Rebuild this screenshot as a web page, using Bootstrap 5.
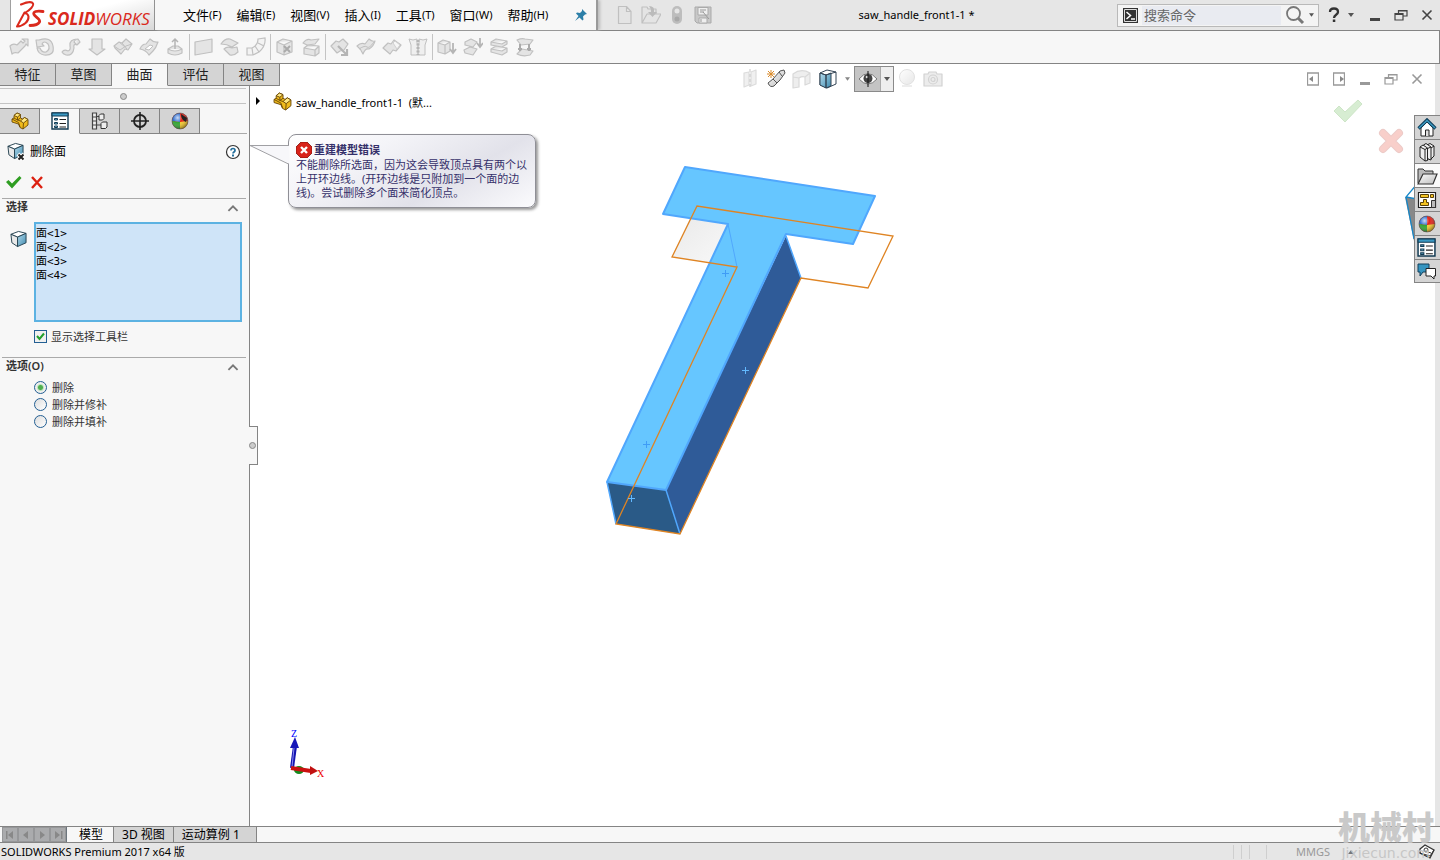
<!DOCTYPE html>
<html lang="zh-CN">
<head>
<meta charset="utf-8">
<meta name="viewport" content="width=device-width, initial-scale=1">
<title>saw_handle_front1-1 - SOLIDWORKS Premium 2017</title>
<link href="https://cdn.jsdelivr.net/npm/bootstrap@5.3.0/dist/css/bootstrap.min.css" rel="stylesheet">
<style>
:root{--line:#848484;--pane:#f7f7f7;--bar:#e6e6e6;--tabbg:#d4d4d4}
body{font-family:"Noto Sans","Noto Sans CJK SC",sans-serif;font-size:12px;line-height:16px;color:#000;background:#fff}
button{border:0;background:none;padding:0;color:inherit;font:inherit;line-height:inherit}
svg{display:block;flex:none}
.titlebar{height:31px;background:var(--bar);border-bottom:1px solid var(--line)}
.brand{width:145px;margin-left:10px;border-left:1px solid #a0a0a0;border-right:1px solid #909090;background:linear-gradient(165deg,#fff 45%,#d8d8d8);gap:3px}
.brand-name{font:italic 17px/18px "Open Sans",sans-serif;color:#da291c;white-space:nowrap;padding-top:8px}
.menus{width:443px;background:var(--pane);border-right:2px solid #9a9a9a;box-shadow:2px 0 3px #bbb;padding-left:28px;gap:15px;font-size:13px}
.menus a{color:#000;text-decoration:none;white-space:nowrap;display:flex;align-items:center}
.menus small{font-size:11px}
.icon26{width:26px;display:flex;align-items:center;justify-content:center}
.quick{margin-left:14px}
.doc-name{font-size:11px}
.search{width:202px;height:23px;border:1px solid #b9b9b9;background:#f4f4f4;padding:0 4px 0 5px}
.search input{width:139px;height:19px;border:0;background:#e9ebf1;font-size:13px;padding:0 2px;outline:0}
.search input::placeholder{color:#666;opacity:1}
.winctl{color:#444;margin-left:9px}
.ribbon{height:33px;background:var(--pane);border-bottom:1px solid var(--line);border-right:1px solid var(--line);padding-left:6px}
.rule{width:1px;height:26px;margin:0 1px;background:#c4c4c4}
.g{stroke:#c0c0c0;fill:#e4e4e4;stroke-width:1.2;stroke-linejoin:round}
.work{min-height:0}
.pane{width:250px;background:var(--pane);border-right:1px solid var(--line);z-index:2}
.cmdtabs{width:280px;height:22px;background:var(--tabbg)}
.cmdtabs button{width:56px;border-right:1px solid var(--line);border-bottom:1px solid var(--line);font-size:13px;line-height:18px;padding-bottom:2px;color:#222}
.cmdtabs .on{background:var(--pane);border-bottom-color:var(--pane)}
.grip{height:16px;margin:2px 3px 4px 0;border-top:1px solid #c4c4c4;border-bottom:1px solid #c4c4c4}
.dot{width:7px;height:7px;border:1px solid #888;border-radius:50%;background:#ccc}
.pmtabs{height:26px;border-bottom:1px solid #aaa;margin-right:2px}
.pmtabs button{width:40px;height:26px;border:1px solid var(--line);border-left:0;background:var(--tabbg);display:flex;align-items:center;justify-content:center}
.pmtabs .on{background:var(--pane);border-bottom-color:var(--pane);border-top-color:#aaa}
.feature{padding:8px 8px 3px 7px}
.confirm{padding:8px 6px 6px;gap:8px}
.sect{border-top:1px solid #aaa;margin:0 3px 0 2px;padding:0 7px 0 4px;font-size:11px;color:#333}
.sect h2{font-size:11px;line-height:15px;height:15px;font-weight:600;margin:0}
.fold{padding-top:5px;height:13px}
.picks{width:208px;height:100px;border:2px solid #5cb2e2;background:#cfe4f8;padding:0;font:11px/14px "DejaVu Sans Mono","Noto Sans CJK SC",monospace;overflow:hidden;outline:0;border-radius:0;margin-left:7px}
.picks option{padding:0 0 4px;height:14px;min-height:14px;line-height:10px;color:#000}
.tick,.dial{appearance:none;width:13px;height:13px;margin:0;border:1px solid #235f93;background:linear-gradient(135deg,#ddd,#fff);flex:none}
.dial{border-radius:50%}
.tick:checked{background:url("data:image/svg+xml,%3Csvg xmlns='http://www.w3.org/2000/svg' viewBox='0 0 11 11'%3E%3Cpath d='M2 5l2.5 3L9 2.5' fill='none' stroke='%2322a02c' stroke-width='2'/%3E%3C/svg%3E") #f0f0f0}
.dial:checked{background:radial-gradient(circle,#4fae4f 0 2px,#bce4bc 3px,#eee 4px)}
.showbar{padding:8px 0 14px}
.opts{padding-top:6px}
.opts label{height:17px;display:flex;align-items:center;gap:5px}
.flap{left:249px;top:362px;width:9px;height:39px;border:1px solid var(--line);border-left:0;background:var(--pane);z-index:3}
.view{background:#fff;margin-right:5px}
.hud{display:grid;grid-template-columns:1fr auto 1fr;height:30px;align-items:center;padding-right:2px}
.docctl{color:#999;padding-right:3px}
.eye{width:40px;height:26px;border:1px solid #8a8a8a;background:#c4c4c4}
.eye button+button{width:13px;background:#eee;border-left:1px solid #aaa;height:100%}
.tree{height:14px;padding-left:5px;font-size:11px}
.bubble{left:38px;top:70px;width:248px;height:74px;border:1px solid #8f8f96;border-radius:8px;background:linear-gradient(150deg,#fff 0,#f4f4f8 30%,#e2e2ea 65%,#fbfbfd);box-shadow:2px 2px 3px #999;padding:6px 6px 0 7px;font-size:11px;line-height:14px;color:#35306a;white-space:nowrap}
.bubble-head{height:17px;gap:2px}
.tail{left:0;top:80px}
.model{left:350px;top:96px}
.triad{left:34px;bottom:46px}
.ok-mark{right:71px;top:34px}
.no-mark{right:30px;top:64px}
.edge{right:18px;top:119px}
.strip{width:5px;background:var(--bar)}
.tasks{right:0;top:51px;width:26px;border:1px solid var(--line);border-right:0;background:var(--tabbg);z-index:4}
.tasks button{height:24px;border-bottom:1px solid var(--line);display:flex;justify-content:center;align-items:center;width:100%;padding-right:2px}
.tasks button:last-child{border:0;height:22px}
.tasks .on{background:#fafafa}
.doctabs{height:17px;background:var(--pane);border-top:1px solid var(--line);border-bottom:1px solid var(--line);font-size:12px;line-height:12px;padding-left:2px}
.doctabs .page{border-right:1px solid var(--line);background:var(--tabbg);padding:0 8px;white-space:nowrap}
.doctabs .on{background:var(--pane);padding:0 10px 0 12px}
.doctabs .go{width:16px;height:15px;background:#aaabad;border:1px solid #969799;display:flex;align-items:center;justify-content:center}
.status{height:17px;background:var(--bar);padding-left:1px;font-size:11px}
.status i{width:1px;height:14px;background:#cfcfcf}
.bars{gap:7px}
.units{color:#999;padding:0 18px 0 29px}
.mark-cn{right:6px;bottom:20px;z-index:5;color:#c9c9c9;font:900 32px/30px "Noto Sans CJK SC",sans-serif;pointer-events:none}
.mark-en{right:10px;bottom:0;z-index:5;color:#c6c6c6;font:14px/14px "DejaVu Sans",sans-serif;pointer-events:none}
</style>
</head>
<body class="vh-100 d-flex flex-column overflow-hidden position-relative">
<svg width="0" height="0" class="position-absolute" aria-hidden="true">
<defs>
<linearGradient id="blu" x2="1" y2="1"><stop stop-color="#b5dcee"/><stop offset="1" stop-color="#3e89ad"/></linearGradient>
<linearGradient id="gry" x2="1" y2="1"><stop stop-color="#fff"/><stop offset="1" stop-color="#bbb"/></linearGradient>
<radialGradient id="shade" cx=".35" cy=".3" r=".75"><stop stop-color="#fff" stop-opacity=".75"/><stop offset=".4" stop-color="#fff" stop-opacity="0"/><stop offset="1" stop-color="#000" stop-opacity=".45"/></radialGradient>
<symbol id="part" viewBox="0 0 18 18"><g stroke="#6b4a08" stroke-width=".9" stroke-linejoin="round"><path d="M1 7l2-1V3.500L6 1l3.500 1.500V6l2 1 2-1.500L17 7.500V13l-5 4-3-1.500-1.500-3.500L1 10z" fill="#f0bb1c"/><path d="M3 3.500L6 1l3.500 1.500L6.500 5zM9.500 9l4-3.500L17 7.500 12.500 11z" fill="#ffe880"/><path d="M3 6l3.500 2 3 1M6.500 5v3L9.500 6M1 7l6.500 3.500L9 15M12.500 11L12 17" fill="none"/></g></symbol>
<symbol id="props" viewBox="0 0 18 18"><path d="M1 1h16v16H1z" fill="#fff" stroke="#123a52" stroke-width="1.400"/><path d="M1 1h16v3H1z" fill="#3a9ac4" stroke="#123a52"/><path d="M3.500 6.500h3v1.500h-3zM3.500 10.500h3V12h-3zM3.500 14h3v1.500h-3z" fill="#7cc3e0" stroke="#123a52"/><path d="M8.500 7.500H15M8.500 11.500H15M8.500 15H15" stroke="#222"/></symbol>
<symbol id="config" viewBox="0 0 18 18"><path d="M1.500 1h4v16h-4zM6 4.500h4M6 13h4" fill="#eee" stroke="#444" stroke-width="1.200"/><path d="M1.500 5h4M1.500 9h4M1.500 13h4" stroke="#444"/><path d="M8 3.500l1.500-1.500H13V6.500L11.500 8H8zM10 11.500l1.500-1.500H16V15l-1.500 1.500H10z" fill="#eee" stroke="#333"/></symbol>
<symbol id="target" viewBox="0 0 18 18"><circle cx="9" cy="9" r="6" fill="none" stroke="#222" stroke-width="1.800"/><path d="M9 0v18M0 9h18" stroke="#222" stroke-width="1.600"/></symbol>
<symbol id="ball" viewBox="0 0 18 18"><circle cx="9" cy="9" r="8" fill="#e1251b"/><path d="M9 1a8 8 0 0 0-8 8l8 1z" fill="#2f6ed0"/><path d="M1 9a8 8 0 0 0 8 8V10z" fill="#33a532"/><path d="M9 17a8 8 0 0 0 8-8L9 10z" fill="#f6ca2a"/><circle cx="9" cy="9" r="8" fill="url(#shade)" stroke="#555" stroke-width=".6"/></symbol>
<symbol id="cube" viewBox="0 0 18 18"><g stroke="#244150" stroke-linejoin="round"><path d="M1 4l8-3 8 2-9 4z" fill="#fff"/><path d="M1 4l7 3v10l-6-4z" fill="#e9e9e9"/><path d="M8 7l9-4v10l-9 4z" fill="url(#blu)"/></g></symbol>
<symbol id="arr" viewBox="0 0 6 4"><path d="M0 0h6L3 4z" fill="#555"/></symbol>
<symbol id="up" viewBox="0 0 10 7"><path d="M1 6l4-4 4 4" fill="none" stroke="#777" stroke-width="1.600"/></symbol>
<symbol id="min" viewBox="0 0 14 14"><path d="M2 10h10v3H2z" fill="currentColor"/></symbol>
<symbol id="rest" viewBox="0 0 14 14"><path d="M1 5.500h8V12H1zM4.500 5.500v-3h8.500V8H9.500M1 6.500h8M4.500 3h8.500" fill="none" stroke="currentColor" stroke-width="1.200"/></symbol>
<symbol id="cls" viewBox="0 0 14 14"><path d="M2.500 2.500l9 9M11.500 2.500l-9 9" stroke="currentColor" stroke-width="1.600"/></symbol>
</defs></svg>

<header class="titlebar d-flex align-items-stretch flex-shrink-0">
  <div class="brand d-flex align-items-center flex-shrink-0 ps-1">
    <svg width="30" height="28" viewBox="0 0 30 28" fill="none" stroke="#da291c" stroke-linecap="round" stroke-linejoin="round"><path d="M6 3.500C12 1 17 .5 18 2.500C19 5 15 9 10.500 11.500" stroke-width="2"/><path d="M9.500 11.500L2 25.500C9 25 14 20 13.500 15.500Q13 12.500 9.500 12" stroke-width="2"/><path d="M28 10.500C22 9.500 17.500 10.500 19 13.500C20 16 26 18 24.500 21C23 24 19 24.500 15 24.500" stroke-width="2.800"/></svg>
    <span class="brand-name"><b>SOLID</b>WORKS</span>
  </div>
  <nav class="menus d-flex flex-shrink-0" aria-label="主菜单">
    <a href="#">文件<small>(F)</small></a><a href="#">编辑<small>(E)</small></a><a href="#">视图<small>(V)</small></a><a href="#">插入<small>(I)</small></a><a href="#">工具<small>(T)</small></a><a href="#">窗口<small>(W)</small></a><a href="#">帮助<small>(H)</small></a>
    <button class="ms-auto me-2" aria-label="固定菜单"><svg width="14" height="14" viewBox="0 0 14 14"><path d="M8 1l5 5-2 .5-2 2 .5 3-1 1L5.500 9.500 1 13l3.500-5L2 5.500l1-1L6 5l2-2z" fill="#2c7fa8"/></svg></button>
  </nav>
  <div class="quick d-flex align-items-center">
    <span class="icon26"><svg width="18" height="20" viewBox="0 0 18 20"><path class="g" d="M2.500 1.500h8l4.500 5v12H2.500zM10.500 1.500v5H15"/></svg></span>
    <span class="icon26"><svg width="20" height="20" viewBox="0 0 20 20"><path class="g" d="M1 18V2h5l1 2h8v5M1 18L6 9h14l-5 9z"/><path d="M8 1q6 0 5 6h3l-4.500 5L7 7h3q0-4-2-6z" fill="#bbb"/></svg></span>
    <span class="icon26"><svg width="12" height="20" viewBox="0 0 12 20"><rect x="1" y="1" width="10" height="18" rx="5" fill="#bdbdbd"/><circle cx="6" cy="6" r="2.500" fill="#e6e6e6"/><circle cx="6" cy="14" r="2.500" fill="#a8a8a8"/></svg></span>
    <span class="icon26"><svg width="18" height="18" viewBox="0 0 18 18"><path d="M1 1h16v16H3l-2-2z" fill="#c8c8c8" stroke="#aaa"/><path d="M4 1.500h10V9H4zM5 12h8v5H5z" fill="#eee" stroke="#aaa"/><path d="M6 4h6M6 6h4M9 6l6 7M7 13v3" stroke="#999"/></svg></span>
  </div>
  <div class="doc-name flex-fill text-center align-self-center">saw_handle_front1-1 *</div>
  <div class="search d-flex align-items-center align-self-center flex-shrink-0">
    <svg width="15" height="15" viewBox="0 0 15 15"><path d="M0 0h15v15H0z" fill="#333"/><path d="M1.500 1.500h12v12h-12z" fill="none" stroke="#ddd"/><path d="M3.500 4l4 3.500-4 3.500M8 11h4" fill="none" stroke="#fff" stroke-width="1.500"/></svg>
    <input class="ms-1" type="text" placeholder="搜索命令" aria-label="搜索命令">
    <button class="ms-1 flex-shrink-0" aria-label="搜索"><svg width="20" height="20" viewBox="0 0 20 20"><circle cx="8.500" cy="8.500" r="6.500" fill="none" stroke="#777" stroke-width="1.800"/><path d="M13 13l5 5" stroke="#777" stroke-width="3"/></svg></button>
    <svg class="ms-1" width="5" height="4"><use href="#arr"/></svg>
  </div>
  <div class="winctl d-flex align-items-center flex-shrink-0">
    <button aria-label="帮助"><svg width="12" height="16" viewBox="0 0 12 16"><path d="M2 5q0-3.500 4-3.500t4 3.500c0 3-4 2.500-4 6" fill="none" stroke="#333" stroke-width="2.300"/><path d="M4.800 12.500h2.500V15H4.800z" fill="#333"/></svg></button>
    <svg class="mx-2" width="6" height="4"><use href="#arr"/></svg>
    <button class="icon26" aria-label="最小化"><svg width="14" height="14"><use href="#min"/></svg></button>
    <button class="icon26" aria-label="还原"><svg width="14" height="14"><use href="#rest"/></svg></button>
    <button class="icon26" aria-label="关闭"><svg width="14" height="14"><use href="#cls"/></svg></button>
  </div>
</header>

<div class="ribbon d-flex align-items-center flex-shrink-0">
  <span class="icon26"><svg width="20" height="20" viewBox="0 0 20 20"><path class="g" d="M1 9q3-3 7-1l4-4 2 2 2-2-3-2h6v7l-2-2-1 2-7 7q-4-1-6 1z"/></svg></span>
  <span class="icon26"><svg width="20" height="20" viewBox="0 0 20 20"><path class="g" d="M4 3q12-4 14 6t-9 9q-6-1-7-7h3q2 5 6 4 5-3 2-8-4-4-6 0l2 2-7 1-1-7z"/></svg></span>
  <span class="icon26"><svg width="20" height="20" viewBox="0 0 20 20"><path class="g" d="M1 15q2-3 6-1 3-1 2-5-1-7 8-7l2 3-3 3q-4-2-3 3-1 8-8 7-3-1-4-3zM15 2l-2 3 3 3"/></svg></span>
  <span class="icon26"><svg width="18" height="20" viewBox="0 0 18 20"><path class="g" d="M4 2h10v10h3l-8 6-8-6h3z" fill="#d4d4d4"/></svg></span>
  <span class="icon26"><svg width="20" height="20" viewBox="0 0 20 20"><path class="g" d="M1 9l5-4 3 1 4-4 6 5-4 6-3-1-4 5-6-6z"/><path d="M6 5l6 5M9 6l5 6M1 9l6 4 6-4 6-2" fill="none" stroke="#c0c0c0"/></svg></span>
  <span class="icon26"><svg width="20" height="20" viewBox="0 0 20 20"><path class="g" d="M1 12q2-5 6-5l4-5q4 4 8 3-2 6-5 9l-4 4q-3-5-9-6z"/><path d="M6 12l5-4 3 1-4 4z" fill="#fff" stroke="#c0c0c0"/></svg></span>
  <span class="icon26"><svg width="18" height="20" viewBox="0 0 18 20"><path class="g" d="M2 12l5-3h5l4 3v4q-7 4-14 0zM2 12q7 4 14 0"/><path d="M9 12V3M6 5l3-3 3 3" stroke="#b5b5b5" stroke-width="1.500" fill="none"/></svg></span>
  <span class="rule"></span>
  <span class="icon26"><svg width="20" height="18" viewBox="0 0 20 18"><path class="g" d="M1 4l17-3v13L1 17z" fill="#d9d9d9"/></svg></span>
  <span class="icon26"><svg width="20" height="20" viewBox="0 0 20 20"><path class="g" d="M1 7q4-6 9-5l8 4-6 4q-5-3-11-3zM4 12q3-3 8-1l5-1 1 5q-4 4-8 3z"/></svg></span>
  <span class="icon26"><svg width="20" height="20" viewBox="0 0 20 20"><path d="M12 2l7-1q1 8-6 14l-6 3H1v-7h5q6-3 6-9zM6 11l1 7M9 9l4 6M12 6l6 3" fill="#f3f3f3" stroke="#c0c0c0" stroke-width="1.200"/></svg></span>
  <span class="rule"></span>
  <span class="icon26"><svg width="18" height="20" viewBox="0 0 18 20"><path class="g" d="M1 5l6-3 9 2v11l-8 3-7-3zM1 5l7 3 8-4M8 8v10"/><path d="M8 9l6 6m0-6l-6 6" stroke="#aaa" stroke-width="2"/></svg></span>
  <span class="icon26"><svg width="20" height="20" viewBox="0 0 20 20"><path class="g" d="M2 6q4-5 8-3l8-1-4 5-8 1zM3 11l4-3 11 1v7l-4 3-11-2zM3 11l11 2 4-4M14 13v6"/></svg></span>
  <span class="rule"></span>
  <span class="icon26"><svg width="20" height="20" viewBox="0 0 20 20"><path class="g" d="M1 9l5-5 3 1 4-3 5 5-4 6-4 1-3 2z"/><path d="M8 9l8 8M17 12v6h-6" fill="none" stroke="#b5b5b5" stroke-width="2.200"/></svg></span>
  <span class="icon26"><svg width="20" height="20" viewBox="0 0 20 20"><path class="g" d="M1 9q4-4 8-2l4-5q3 3 6 2-1 5-6 8-4-1-6 5-2-5-6-8z"/><path d="M3 12q6-4 8-2t7-5" fill="none" stroke="#c0c0c0"/></svg></span>
  <span class="icon26"><svg width="20" height="20" viewBox="0 0 20 20"><path class="g" d="M1 11l5-5 3 1 3-4 7 5-5 6-3-1-3 4z"/><path d="M11 6l2-2 5 4-3 4z" fill="#f6f6f6" stroke="#d0d0d0"/></svg></span>
  <span class="icon26"><svg width="20" height="20" viewBox="0 0 20 20"><path d="M1 2q4 2 8 0v4l1 2v10H3V8zM19 2q-4 2-8 0v4l-1 2v10h7V8z" fill="#efefef" stroke="#c0c0c0"/><path d="M10 3v15" stroke="#b5b5b5" stroke-width="3" stroke-dasharray="2 1.500"/></svg></span>
  <span class="rule"></span>
  <span class="icon26"><svg width="20" height="20" viewBox="0 0 20 20"><path class="g" d="M1 6l5-3 7 2v9l-5 3-7-2zM1 6l7 2 5-3M8 8v9"/><path d="M16 6v9M13 12l3 4 3-4" fill="none" stroke="#b5b5b5" stroke-width="1.800"/></svg></span>
  <span class="icon26"><svg width="20" height="20" viewBox="0 0 20 20"><path class="g" d="M2 5l6-3 6 3-4 5-8-2zM1 13l6-3 7 2-4 6-8-2z"/><path d="M17 1v8M14 6l3 4 3-4" fill="none" stroke="#b5b5b5" stroke-width="1.800"/></svg></span>
  <span class="icon26"><svg width="20" height="20" viewBox="0 0 20 20"><path class="g" d="M2 5l5-3 11 2v3l-5 3L2 8zM2 12l5-3 11 2v4l-5 3-11-3zM2 5l11 2 5-3M2 12l11 2 5-3"/></svg></span>
  <span class="icon26"><svg width="20" height="20" viewBox="0 0 20 20"><path class="g" d="M2 3q5-2 8-1l8 1-3 4-9 1zM2 17l5-5 11 2-3 4q-7 2-13-1z"/><path d="M5 7v7M14 7v7M3 12h4M12 12h4" stroke="#aaa" stroke-width="2"/></svg></span>
</div>

<main class="work d-flex flex-fill position-relative">
  <aside class="pane flex-shrink-0">
    <div class="cmdtabs d-flex position-relative"><button>特征</button><button>草图</button><button class="on">曲面</button><button>评估</button><button>视图</button></div>
    <div class="grip d-flex justify-content-center align-items-center"><span class="dot"></span></div>
    <div class="pmtabs d-flex">
      <button aria-label="设计树"><svg width="18" height="18"><use href="#part"/></svg></button>
      <button class="on" aria-label="属性"><svg width="18" height="18"><use href="#props"/></svg></button>
      <button aria-label="配置"><svg width="18" height="18"><use href="#config"/></svg></button>
      <button aria-label="尺寸专家"><svg width="18" height="18"><use href="#target"/></svg></button>
      <button aria-label="外观"><svg width="18" height="18" viewBox="0 0 18 18"><use href="#ball" width="18" height="18"/><path d="M10 2l6 4-1 4q-5-2-5-8z" fill="#222"/></svg></button>
    </div>
    <div class="feature d-flex align-items-center">
      <svg width="19" height="19" viewBox="0 0 19 19"><use href="#cube" width="17" height="18"/><path d="M11 12l6 6m0-6l-6 6" stroke="#fff" stroke-width="4"/><path d="M11.500 12.500l5 5m0-5l-5 5" stroke="#222" stroke-width="2"/></svg>
      <span class="ms-1">删除面</span>
      <button class="ms-auto" aria-label="帮助"><svg width="16" height="16" viewBox="0 0 16 16"><circle cx="8" cy="8" r="6.500" fill="#fff" stroke="#333" stroke-width="1.200"/><path d="M6 6.500q0-2 2-2t2 2C10 8 8 8 8 9.500" fill="none" stroke="#256f9c" stroke-width="1.700"/><path d="M7 10.500h2v2H7z" fill="#256f9c"/></svg></button>
    </div>
    <div class="confirm d-flex">
      <button aria-label="确定"><svg width="16" height="20" viewBox="0 0 16 20"><path d="M0 10l2.500-2L6 11.500 13.500 4l2 2L6 16.500z" fill="#2f9e22"/></svg></button>
      <button aria-label="取消"><svg width="14" height="20" viewBox="0 0 14 20"><path d="M2 5l10 11M12 5L2 16" stroke="#dc2010" stroke-width="2.400"/></svg></button>
    </div>
    <section class="sect">
      <div class="d-flex justify-content-between"><h2 id="sel-h">选择</h2><button class="fold" aria-label="折叠选择"><svg width="12" height="8"><use href="#up"/></svg></button></div>
      <div class="d-flex pt-2">
        <svg class="mt-2 ms-1" width="17" height="18"><use href="#cube"/></svg>
        <select class="picks flex-shrink-0" multiple size="7" aria-labelledby="sel-h"><option>面&lt;1&gt;</option><option>面&lt;2&gt;</option><option>面&lt;3&gt;</option><option>面&lt;4&gt;</option></select>
      </div>
      <div class="showbar d-flex align-items-center ms-4 ps-1 gap-1"><input class="tick" type="checkbox" id="showbar" checked><label for="showbar" class="lh-1">显示选择工具栏</label></div>
    </section>
    <section class="sect">
      <div class="d-flex justify-content-between"><h2>选项(O)</h2><button class="fold" aria-label="折叠选项"><svg width="12" height="8"><use href="#up"/></svg></button></div>
      <div class="opts ms-4 ps-1">
        <label><input class="dial" type="radio" name="mode" checked>删除</label>
        <label><input class="dial" type="radio" name="mode">删除并修补</label>
        <label><input class="dial" type="radio" name="mode">删除并填补</label>
      </div>
    </section>
  </aside>
  <div class="flap position-absolute d-flex align-items-center"><span class="dot"></span></div>

  <section class="view flex-fill position-relative" aria-label="图形区域">
    <div class="hud">
      <span></span>
      <div class="d-flex align-items-center">
        <span class="icon26"><svg width="16" height="20" viewBox="0 0 16 20" opacity=".55"><path class="g" d="M2 4l5-1v13l-5 2zM9 3l5-2v14l-5 2z"/><path d="M8 0v20" stroke="#999" stroke-dasharray="3 2"/></svg></span>
        <span class="icon26"><svg width="20" height="20" viewBox="0 0 20 20"><path d="M2 14l5-4 7-8 4-1 1 3-5 7-6 6q-4 2-6-3z" fill="url(#gry)" stroke="#555"/><path d="M7 10l4 4M13 3l3 4" stroke="#555"/><path d="M5 1v8M1 5h8M2 2l6 6M8 2L2 8" stroke="#d98a2b"/></svg></span>
        <span class="icon26"><svg width="20" height="20" viewBox="0 0 20 20" opacity=".6"><path class="g" d="M1 5q8-6 17-1v10l-5 2V8q-3-1-6 1v9l-6 1zM1 8l6 1M13 8l5-4"/></svg></span>
        <button class="icon26" aria-label="显示样式"><svg width="18" height="20" viewBox="0 0 18 20"><g stroke="#345" stroke-linejoin="round"><path d="M1 4l7-3 9 2v12l-9 4-7-3z" fill="#fff"/><path d="M1 4l6 2v13l-6-3zM7 6l5-2v13l-5 2z" fill="url(#blu)"/><path d="M1 4l6 2 10-3"  fill="none"/></g></svg></button>
        <svg class="mx-1" width="5" height="4" opacity=".7"><use href="#arr"/></svg>
        <div class="eye d-flex align-items-center"><button class="icon26" aria-label="隐藏/显示项目"><svg width="20" height="16" viewBox="0 0 20 16"><path d="M1 8q9-11 18 0-9 10-18 0z" fill="#fff" stroke="#777"/><circle cx="10" cy="7.500" r="4.500" fill="#444"/><circle cx="9" cy="6" r="1.300" fill="#ddd"/><path d="M10 0v16" stroke="#111"/></svg></button><button class="d-flex align-items-center justify-content-center flex-shrink-0" aria-label="更多显示项目"><svg width="6" height="4"><use href="#arr"/></svg></button></div>
        <span class="icon26"><svg width="18" height="20" viewBox="0 0 18 20" opacity=".35"><circle cx="9" cy="8" r="7.500" fill="url(#gry)" stroke="#aaa"/><path d="M4 17h10" stroke="#ccc" stroke-width="2"/></svg></span>
        <span class="icon26"><svg width="20" height="18" viewBox="0 0 20 18" opacity=".7"><path class="g" d="M1 4h4l1-2h7l1 2h5v12H1z"/><circle class="g" cx="10" cy="9.500" r="4.500"/><circle class="g" cx="10" cy="9.500" r="2"/></svg></span>
      </div>
      <div class="docctl d-flex justify-content-end">
        <button class="icon26" aria-label="左侧窗格"><svg width="12" height="14" viewBox="0 0 12 14"><path d="M.5 1h11v12H.5zM.5 1h11" fill="none" stroke="#999" stroke-width="1.300"/><path d="M6 4v6L2 7z" fill="#888"/></svg></button>
        <button class="icon26" aria-label="右侧窗格"><svg width="12" height="14" viewBox="0 0 12 14"><path d="M.5 1h11v12H.5z" fill="none" stroke="#999" stroke-width="1.300"/><path d="M7 4v6l4-3z" fill="#888"/></svg></button>
        <button class="icon26" aria-label="最小化文档"><svg width="14" height="14"><use href="#min"/></svg></button>
        <button class="icon26" aria-label="还原文档"><svg width="14" height="14"><use href="#rest"/></svg></button>
        <button class="icon26" aria-label="关闭文档"><svg width="14" height="14"><use href="#cls"/></svg></button>
      </div>
    </div>
    <div class="tree d-flex align-items-center">
      <svg width="6" height="8" viewBox="0 0 6 8"><path d="M1 0l4 4-4 4z"/></svg>
      <svg class="ms-2 me-1 ps-1" width="23" height="19" viewBox="0 0 18 18"><use href="#part" width="18" height="18"/></svg>
      <span class="pt-1">saw_handle_front1-1&nbsp; (默...</span>
    </div>
    <div class="bubble position-absolute">
      <div class="bubble-head d-flex align-items-center"><svg width="16" height="16" viewBox="0 0 16 16"><path d="M5 0h6l5 5v6l-5 5H5l-5-5V5z" fill="#d8231a" stroke="#801008" stroke-width=".8"/><path d="M5 5l6 6m0-6l-6 6" stroke="#fff" stroke-width="2.400"/></svg><strong>重建模型错误</strong></div>
      不能删除所选面，因为这会导致顶点具有两个以<br>上开环边线。(开环边线是只附加到一个面的边<br>线)。尝试删除多个面来简化顶点。
    </div>
    <svg class="tail position-absolute" width="40" height="22"><path d="M0 1.500h39.500v18.500z" fill="#f7f7fa"/><path d="M39 1.500H0L38.500 20" fill="none" stroke="#a0a0a4"/></svg>
    <svg class="model position-absolute" width="300" height="380" viewBox="600 160 300 380" role="img" aria-label="零件模型">
      <defs><linearGradient id="facet" x2="1" y2="1"><stop stop-color="#e9e9e9"/><stop offset="1" stop-color="#f8f8f8"/></linearGradient></defs>
      <path d="M692 214l36 10-17 39-39-6z" fill="url(#facet)"/>
      <path d="M786 236l15 42-121 256-15-44z" fill="#2f5b98"/>
      <path d="M607 482l59 8 14 44-64-10z" fill="#2a5a87"/>
      <path d="M685 167l190 29-22 48-67-10-120 256-59-8 121-258-65-10z" fill="#66c6ff" stroke="#50a7fd" stroke-width="2" stroke-linejoin="round"/>
      <path d="M786 236l15 42M607 482l9 42M666 490l14 44" fill="none" stroke="#50a7fd" stroke-width="1.500"/>
      <path d="M728 224l9 43" stroke="#50a7fd"/>
      <path d="M616 524L737 267l-65-10 25-51 196 30-25 52-67-10-121 256z" fill="none" stroke="#df8423" stroke-width="1.300"/>
      <path d="M722 273.500h7M725.500 270v7M643 444.500h7M646.500 441v7" stroke="#3f9cf6"/>
      <path d="M742 370.500h7M745.500 367v7M628 498.500h7M631.500 495v7" stroke="#62b9ff"/>
    </svg>
    <div class="ok-mark position-absolute"><svg width="32" height="26" viewBox="0 0 32 26"><path d="M2 13l5-5 6 6L26 2l4 4-17 18z" fill="#d7edd2" stroke="#cde5c7" stroke-linejoin="round"/></svg></div>
    <div class="no-mark position-absolute"><svg width="28" height="26" viewBox="0 0 28 26"><path d="M6 5l16 16m0-16L6 21" stroke="#eccbc8" stroke-width="8" stroke-linecap="round"/><path d="M6 5l16 16m0-16L6 21" stroke="#f8cfca" stroke-width="6" stroke-linecap="round"/></svg></div>
    <svg class="edge position-absolute" width="12" height="60" viewBox="0 0 12 60"><path d="M0 14l12 2v42H9z" fill="#888"/><path d="M12 1L1 14l11 2M1 14l8 42" fill="none" stroke="#1587c9" stroke-width="1.300"/></svg>
    <svg class="triad position-absolute" width="42" height="54" viewBox="284 727 42 54">
      <ellipse cx="299" cy="771" rx="5" ry="4" fill="#168a1c"/><path d="M292 769l3-22" stroke="#1414b0" stroke-width="4"/><path d="M292 768l2-19" stroke="#8a8af0"/><path d="M290 749l5-11 4 11z" fill="#1717b8"/>
      <path d="M291 769l20 3" stroke="#cc1010" stroke-width="4"/><path d="M310 767l8 5-8 4z" fill="#c01010"/>
      <text x="291" y="738" font-family="Liberation Serif" font-size="10" fill="#00f">Z</text><text x="317" y="778" font-family="Liberation Serif" font-size="10" fill="#e00">X</text>
    </svg>
  </section>
  <div class="strip position-absolute top-0 bottom-0 end-0"></div>
  <nav class="tasks position-absolute" aria-label="任务窗格">
    <button aria-label="主页"><svg width="20" height="20" viewBox="0 0 20 20"><path d="M4 10v8h12v-8l-6-6z" fill="#fff" stroke="#222"/><path d="M8.500 18v-6h3.500v6" fill="#ddd" stroke="#222"/><path d="M1.500 10.500L10 2l8.500 8.500" fill="none" stroke="#12405c" stroke-width="3.200"/><path d="M2 10L10 2.500l8 7.500" fill="none" stroke="#3b9ac2" stroke-width="1.300"/></svg></button>
    <button aria-label="设计库"><svg width="18" height="20" viewBox="0 0 18 20"><g fill="#eee" stroke="#222" stroke-linejoin="round"><path d="M9 3l3-1.500L16 4v10l-3 3z"/><path d="M5.500 3L8 1.500 13 5v13l-3-1z"/><path d="M2 5l3-2 4.500 3v12.500L7 19l-5-4z"/><path d="M2 5l5 2.500V19M7 7.500L9.500 6M9.500 6.500L13 5M13 6l3-2" fill="none"/></g></svg></button>
    <button class="on" aria-label="文件探索器"><svg width="22" height="20" viewBox="0 0 22 20"><path d="M2 17V3h5l2 2h8v3" fill="#bbb" stroke="#333"/><path d="M2 18L7 8h14l-4 10z" fill="url(#gry)" stroke="#333" stroke-width="1.200"/></svg></button>
    <button aria-label="视图调色板"><svg width="20" height="18" viewBox="0 0 20 18"><path d="M1.500 1.500h17v15h-17z" fill="#fff" stroke="#222" stroke-width="1.200"/><path d="M3.500 3.500h8v3h-8zM13.500 3.500h3v3h-3zM6.500 8.500h3v3h2v3h-8v-3h3z" fill="#f5c422" stroke="#5a4208"/><path d="M14.500 9.500h4v7h-4z" fill="#bbb" stroke="#333"/></svg></button>
    <button aria-label="外观布景"><svg width="18" height="18"><use href="#ball"/></svg></button>
    <button aria-label="自定义属性"><svg width="19" height="19"><use href="#props"/></svg></button>
    <button aria-label="论坛"><svg width="20" height="18" viewBox="0 0 20 18"><path d="M1 2h11v8H6l-3 4v-4H1z" fill="#3594bf" stroke="#12405c"/><path d="M9 6.500h9.500V14H17v3l-3-3H9z" fill="#fff" stroke="#222"/></svg></button>
  </nav>
</main>

<footer class="flex-shrink-0">
  <div class="doctabs d-flex">
    <div class="d-flex flex-shrink-0 border-end border-secondary">
      <button class="go" aria-label="第一页"><svg width="10" height="10" viewBox="0 0 10 10"><path d="M8 1v8L3 5zM1 1h1.500v8H1z" fill="#888"/></svg></button><button class="go" aria-label="上一页"><svg width="10" height="10" viewBox="0 0 10 10"><path d="M7 1v8L2 5z" fill="#888"/></svg></button><button class="go" aria-label="下一页"><svg width="10" height="10" viewBox="0 0 10 10"><path d="M3 1v8l5-4z" fill="#888"/></svg></button><button class="go" aria-label="最后一页"><svg width="10" height="10" viewBox="0 0 10 10"><path d="M2 1v8l5-4zM8 1h1.500v8H8z" fill="#888"/></svg></button>
    </div>
    <button class="page on">模型</button><button class="page">3D 视图</button><button class="page pe-3">运动算例 1</button>
  </div>
  <div class="status d-flex align-items-center">
    <span class="flex-fill">SOLIDWORKS Premium 2017 x64 版</span>
    <div class="bars d-flex me-3"><i></i><i></i><i></i></div><i></i>
    <span class="units">MMGS</span>
    <svg class="me-5" width="6" height="4" viewBox="0 0 6 4"><path d="M0 4h6L3 0z" fill="#777"/></svg>
    <svg class="ms-3 me-1" width="18" height="16" viewBox="0 0 16 16"><path d="M1 5l5-4 9 5-4 8L1 9z" fill="#fff" stroke="#333" stroke-width="1.300"/><circle cx="7" cy="6" r="2" fill="none" stroke="#333"/><path d="M1 9l10 3 4-6M9 8l3 1" fill="none" stroke="#333"/></svg>
  </div>
</footer>
<div class="mark-cn position-absolute">机械村</div>
<div class="mark-en position-absolute">Jixiecun.com</div>
<script src="https://cdn.jsdelivr.net/npm/bootstrap@5.3.0/dist/js/bootstrap.bundle.min.js"></script>
</body>
</html>
